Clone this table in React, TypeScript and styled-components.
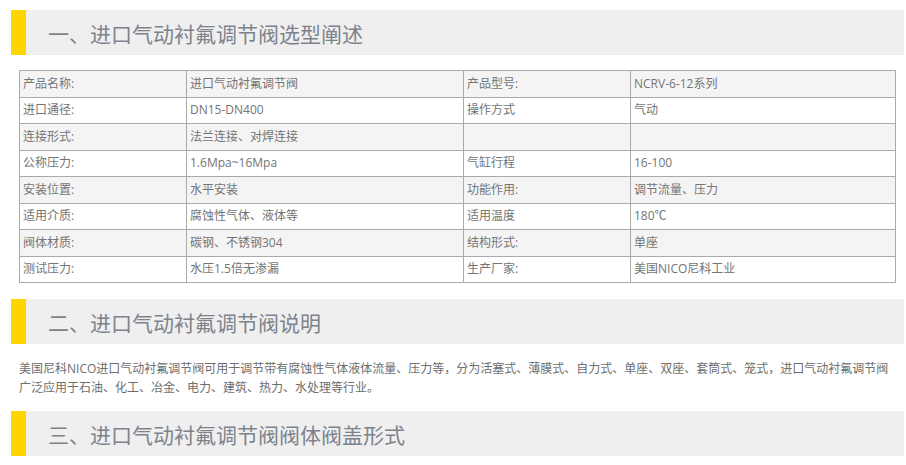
import React from "react";
import styled, { createGlobalStyle } from "styled-components";

const Global = createGlobalStyle`
  html, body { margin: 0; padding: 0; background: #fff; }
  body { font-family: "Open Sans", "Noto Sans CJK SC", sans-serif; }
`;

const Page = styled.div`
  width: 906px;
  padding: 10px 2px 0 11px;
  box-sizing: border-box;
  display: flex;
  flex-direction: column;
`;

const SectionHead = styled.h2`
  margin: 0;
  height: 45px;
  display: flex;
  align-items: center;
  background: #efefef;
  border-left: 15px solid #ffd500;
  padding-left: 22px;
  font-family: "Noto Sans CJK SC", sans-serif;
  font-weight: 400;
  font-size: 21px;
  color: #7d838d;
  letter-spacing: 0;
`;

const Table = styled.table`
  margin: 15px 9px 16px 8px;
  border-collapse: collapse;
  table-layout: fixed;
  width: 876px;
  font-size: 12px;
  color: #747474;
`;

const Row = styled.tr<{ $alt: boolean }>`
  height: 26.5px;
  background: ${(p) => (p.$alt ? "#f4f4f4" : "#ffffff")};
`;

const Cell = styled.td`
  border: 1px solid #aaaaaa;
  padding: 0 3px;
  vertical-align: middle;
  font-family: "Open Sans", "Noto Sans CJK SC", sans-serif;
  line-height: 16px;
  white-space: nowrap;
`;

const Para = styled.p`
  margin: 16px 8px 14px 8px;
  font-size: 12px;
  line-height: 18.5px;
  color: #6e6e6e;
  font-family: "Open Sans", "Noto Sans CJK SC", sans-serif;
`;

const rows: [string, string, string, string][] = [
  ["产品名称:", "进口气动衬氟调节阀", "产品型号:", "NCRV-6-12系列"],
  ["进口通径:", "DN15-DN400", "操作方式", "气动"],
  ["连接形式:", "法兰连接、对焊连接", "", ""],
  ["公称压力:", "1.6Mpa~16Mpa", "气缸行程", "16-100"],
  ["安装位置:", "水平安装", "功能作用:", "调节流量、压力"],
  ["适用介质:", "腐蚀性气体、液体等", "适用温度", "180℃"],
  ["阀体材质:", "碳钢、不锈钢304", "结构形式:", "单座"],
  ["测试压力:", "水压1.5倍无渗漏", "生产厂家:", "美国NICO尼科工业"],
];

export default function App() {
  return (
    <Page>
      <Global />
      <SectionHead>一、进口气动衬氟调节阀选型阐述</SectionHead>
      <Table>
        <colgroup>
          <col style={{ width: 167 }} />
          <col style={{ width: 277 }} />
          <col style={{ width: 167 }} />
          <col style={{ width: 265 }} />
        </colgroup>
        <tbody>
          {rows.map((r, i) => (
            <Row key={i} $alt={i % 2 === 0}>
              {r.map((c, j) => (
                <Cell key={j}>{c}</Cell>
              ))}
            </Row>
          ))}
        </tbody>
      </Table>
      <SectionHead>二、进口气动衬氟调节阀说明</SectionHead>
      <Para>
        美国尼科NICO进口气动衬氟调节阀可用于调节带有腐蚀性气体液体流量、压力等，分为活塞式、薄膜式、自力式、单座、双座、套筒式、笼式，进口气动衬氟调节阀广泛应用于石油、化工、冶金、电力、建筑、热力、水处理等行业。
      </Para>
      <SectionHead>三、进口气动衬氟调节阀阀体阀盖形式</SectionHead>
    </Page>
  );
}
